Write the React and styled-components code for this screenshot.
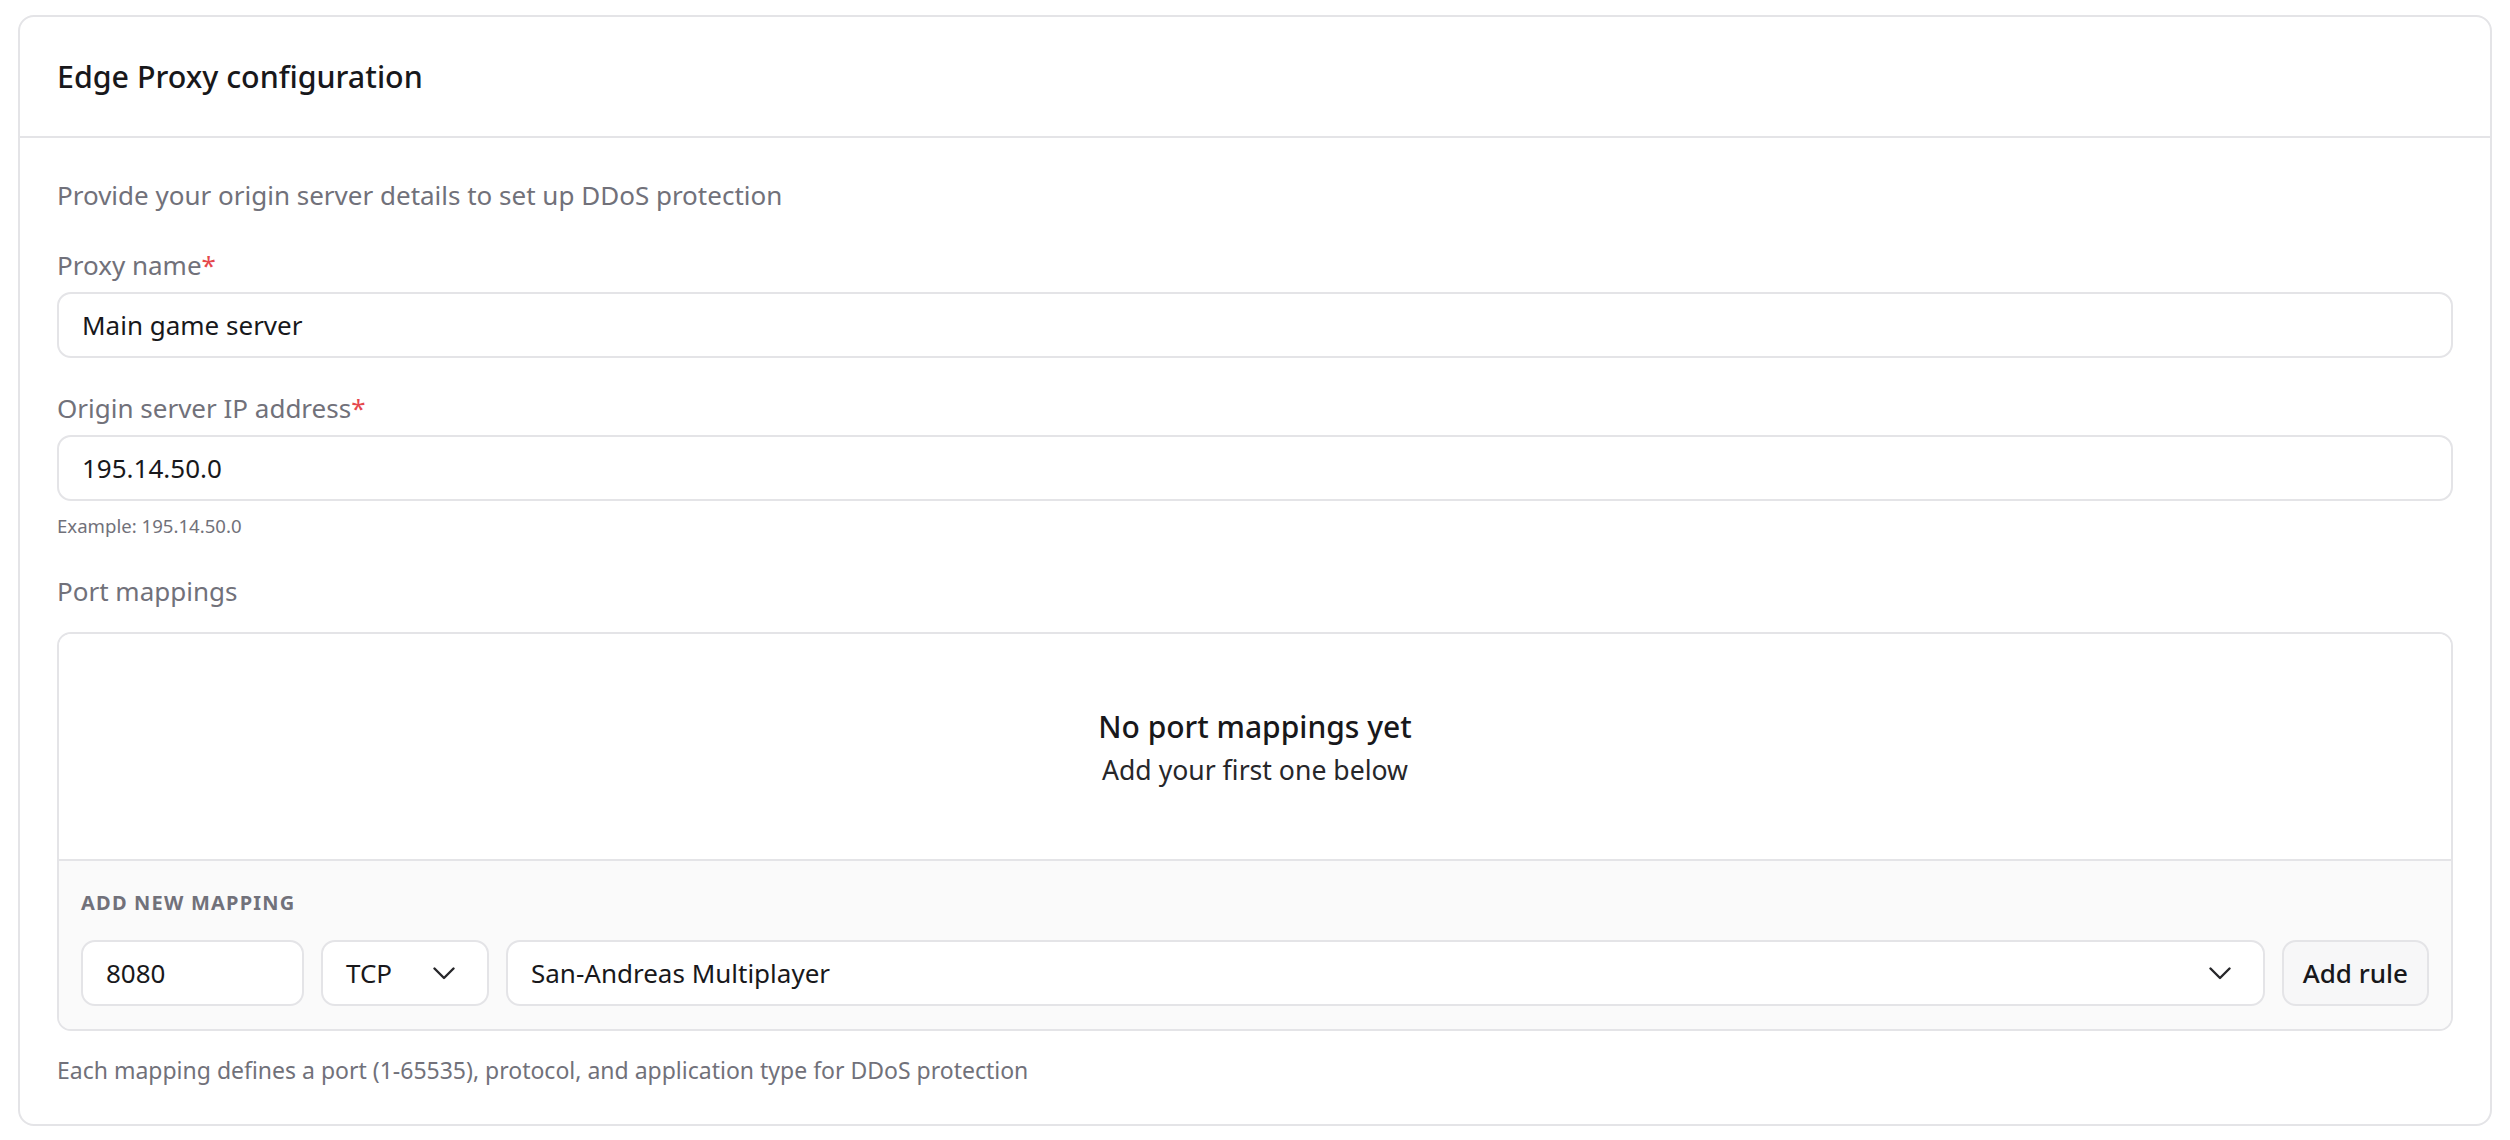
import React from "react";
import styled, { createGlobalStyle } from "styled-components";

const GlobalStyle = createGlobalStyle`
  html, body {
    margin: 0;
    background: #ffffff;
  }
  body {
    font-family: "Noto Sans", "Open Sans", sans-serif;
    color: #18181b;
  }
  #root {
    padding: 15px 18px;
  }
`;

const Card = styled.section`
  border: 2px solid #e4e4e7;
  border-radius: 16px;
  background: #fff;
`;

const CardHeader = styled.header`
  height: 119px;
  display: flex;
  align-items: center;
  padding: 0 37px;
  border-bottom: 2px solid #e4e4e7;
`;

const Title = styled.h2`
  margin: 0;
  font-size: 30.4px;
  font-weight: 500;
  color: #18181b;
`;

const CardBody = styled.div`
  padding: 38px 37px 37px;
`;

const Description = styled.p`
  margin: 0 0 32px;
  font-size: 26px;
  line-height: 38px;
  color: #71717a;
`;

const Field = styled.div`
  margin-bottom: ${(p) => p.$gap || 31}px;
`;

const Label = styled.label`
  display: block;
  margin-bottom: ${(p) => p.$gap || 8}px;
  font-size: 26px;
  line-height: 38px;
  color: #71717a;

  span {
    color: #e5484d;
  }
`;

const TextInput = styled.input`
  box-sizing: border-box;
  display: block;
  width: ${(p) => p.$width || "100%"};
  height: 66px;
  padding: 0 23px;
  border: 2px solid #e4e4e7;
  border-radius: 14px;
  background: #fff;
  font-family: inherit;
  font-size: 26px;
  color: #18181b;
  outline: none;
  flex-shrink: 0;
`;

const Hint = styled.div`
  margin-top: ${(p) => p.$top || 9}px;
  font-size: ${(p) => p.$size || 18.6}px;
  line-height: ${(p) => p.$line || 31}px;
  color: #71717a;
`;

const MappingBox = styled.div`
  border: 2px solid #e4e4e7;
  border-radius: 14px;
  overflow: hidden;
`;

const EmptyState = styled.div`
  height: 225px;
  display: flex;
  flex-direction: column;
  align-items: center;
  justify-content: center;
  background: #fff;
`;

const EmptyTitle = styled.div`
  font-size: 30px;
  font-weight: 500;
  line-height: 45px;
  color: #18181b;
`;

const EmptyText = styled.div`
  margin-top: 2px;
  font-size: 26.6px;
  line-height: 38px;
  color: #27272a;
`;

const AddSection = styled.div`
  border-top: 2px solid #e4e4e7;
  background: #fafafa;
  padding: 27px 22px 23px;
`;

const SectionLabel = styled.div`
  margin-bottom: 23px;
  font-size: 20px;
  line-height: 29px;
  font-weight: 700;
  letter-spacing: 0.06em;
  text-transform: uppercase;
  color: #71717a;
`;

const Row = styled.div`
  display: flex;
  align-items: center;
  gap: 17px;
`;

const Select = styled.button`
  box-sizing: border-box;
  display: flex;
  align-items: center;
  justify-content: space-between;
  flex: ${(p) => (p.$width ? "0 0 auto" : "1 1 auto")};
  width: ${(p) => p.$width || "auto"};
  height: 66px;
  padding: 0 32px 0 23px;
  border: 2px solid #e4e4e7;
  border-radius: 14px;
  background: #fff;
  font-family: inherit;
  font-size: 26px;
  color: #18181b;
  text-align: left;
  cursor: pointer;
`;

const Button = styled.button`
  box-sizing: border-box;
  flex: 0 0 auto;
  height: 66px;
  padding: 0 19px;
  border: 2px solid #e4e4e7;
  border-radius: 14px;
  background: #f7f7f8;
  font-family: inherit;
  font-size: 26px;
  font-weight: 500;
  color: #18181b;
  cursor: pointer;
`;

const Chevron = () => (
  <svg width="22" height="13" viewBox="0 0 22 13" fill="none">
    <path
      d="M1.5 1.5 L11 11 L20.5 1.5"
      stroke="#27272a"
      strokeWidth="2.4"
      strokeLinecap="round"
      strokeLinejoin="round"
    />
  </svg>
);

const App = () => {
  return (
    <>
      <GlobalStyle />
      <Card>
        <CardHeader>
          <Title>Edge Proxy configuration</Title>
        </CardHeader>
        <CardBody>
          <Description>
            Provide your origin server details to set up DDoS protection
          </Description>

          <Field>
            <Label>
              Proxy name<span>*</span>
            </Label>
            <TextInput defaultValue="Main game server" />
          </Field>

          <Field>
            <Label>
              Origin server IP address<span>*</span>
            </Label>
            <TextInput defaultValue="195.14.50.0" />
            <Hint>Example: 195.14.50.0</Hint>
          </Field>

          <Label $gap={22}>Port mappings</Label>
          <MappingBox>
            <EmptyState>
              <EmptyTitle>No port mappings yet</EmptyTitle>
              <EmptyText>Add your first one below</EmptyText>
            </EmptyState>
            <AddSection>
              <SectionLabel>Add new mapping</SectionLabel>
              <Row>
                <TextInput $width="223px" defaultValue="8080" />
                <Select $width="168px">
                  TCP
                  <Chevron />
                </Select>
                <Select>
                  San-Andreas Multiplayer
                  <Chevron />
                </Select>
                <Button>Add rule</Button>
              </Row>
            </AddSection>
          </MappingBox>
          <Hint $top={22} $size={23} $line={34}>
            Each mapping defines a port (1-65535), protocol, and application
            type for DDoS protection
          </Hint>
        </CardBody>
      </Card>
    </>
  );
};

export default App;
